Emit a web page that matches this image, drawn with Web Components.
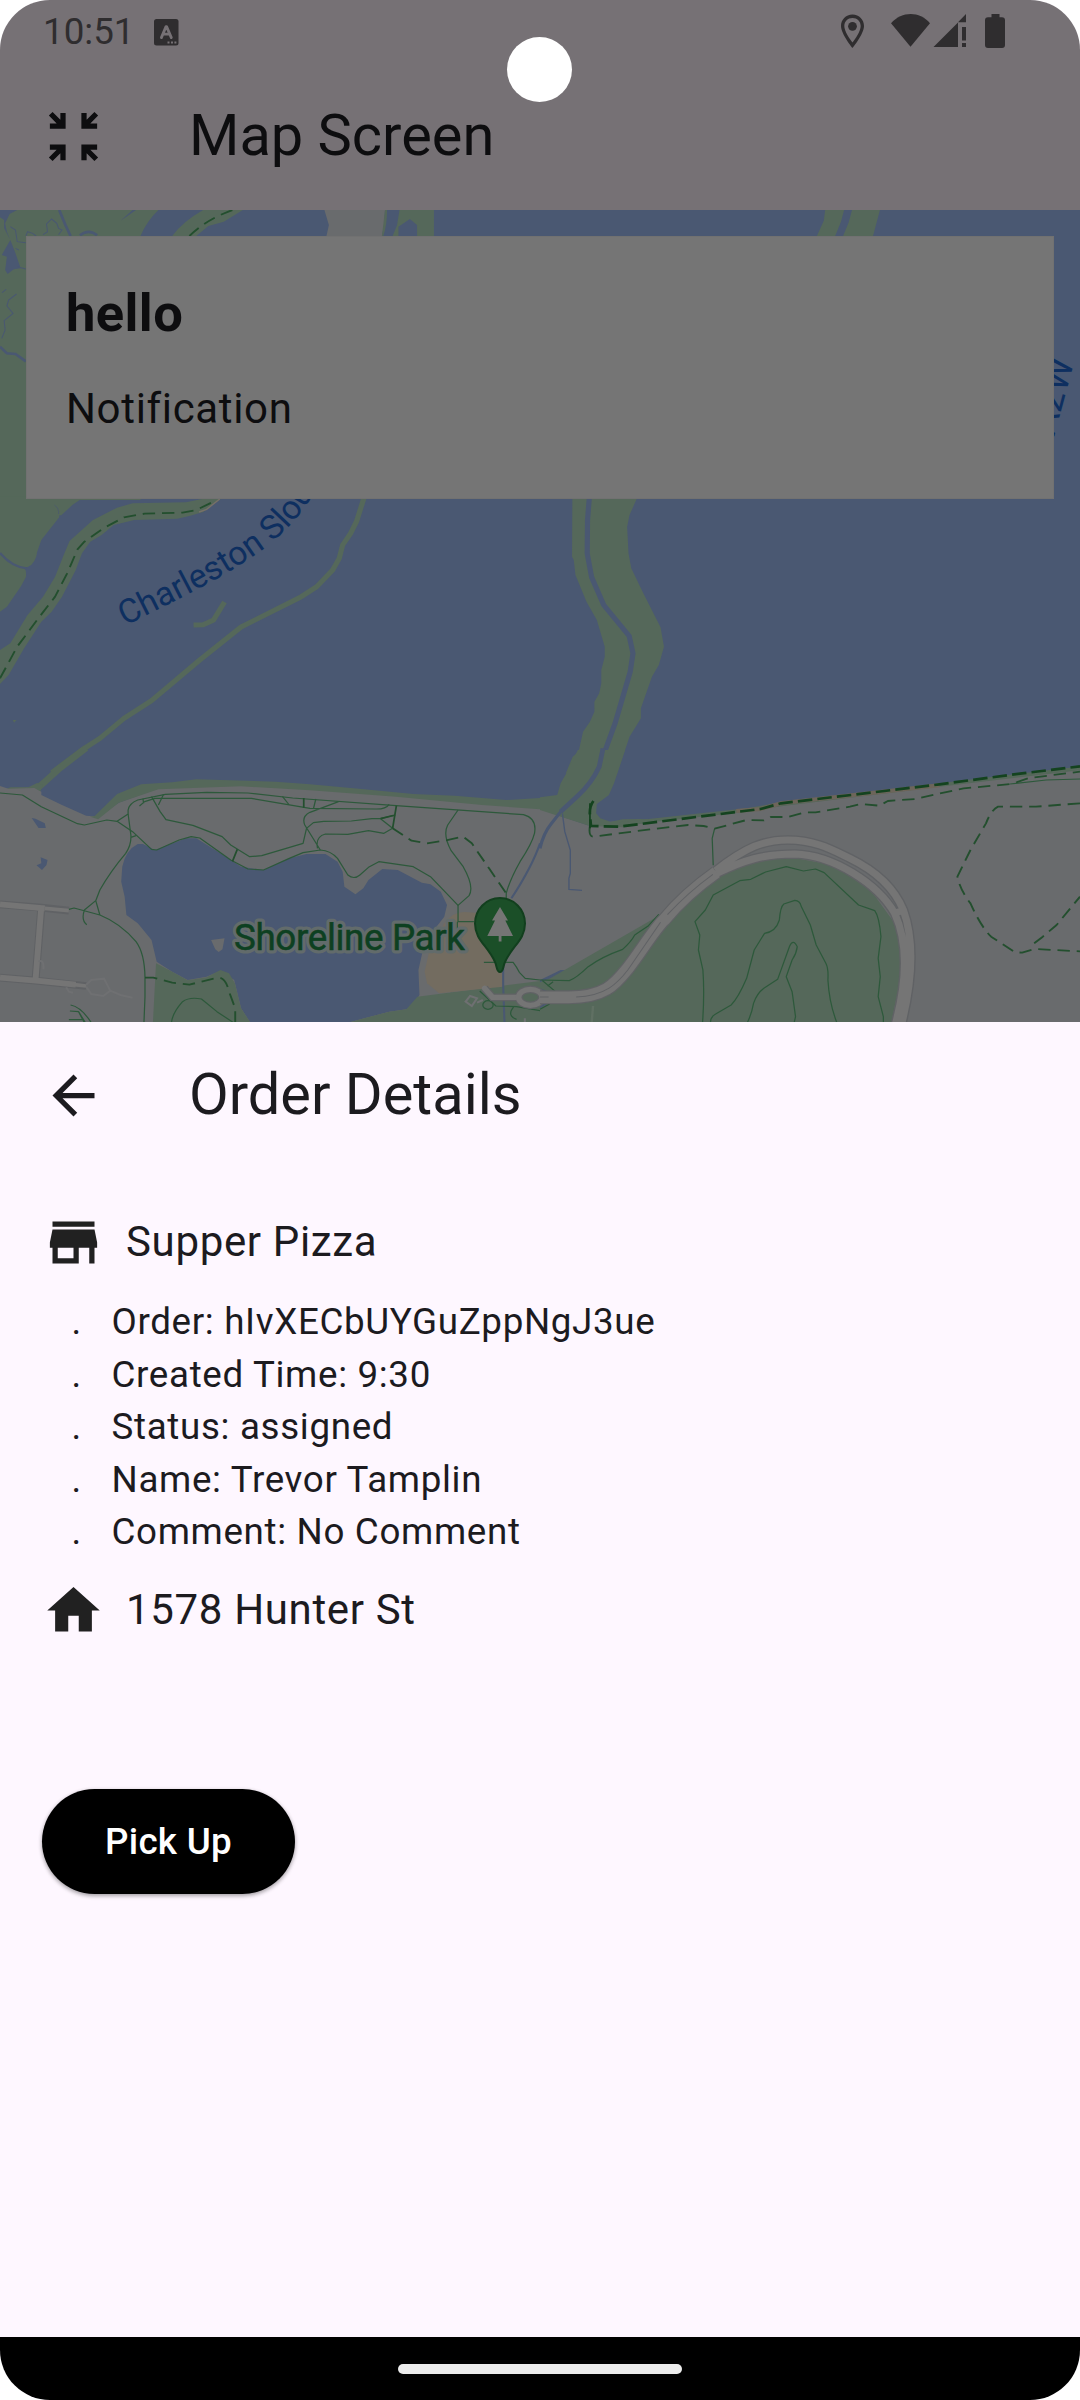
<!DOCTYPE html>
<html lang="en">
<head>
<meta charset="utf-8">
<title>Order Details</title>
<style>
html,body{margin:0;background:#fff}
body{width:1080px;height:2400px;overflow:hidden;font-family:Roboto,"Liberation Sans",sans-serif}
</style>
</head>
<body>
<phone-screen>
  <status-bar slot="top" time="10:51"></status-bar>
  <title-bar slot="top" dim icon="collapse">Map Screen</title-bar>
  <area-map slot="map"><notice-card><span slot="title">hello</span><span slot="text">Notification</span></notice-card></area-map>
  <order-sheet slot="sheet">
    <title-bar icon="back">Order Details</title-bar>
    <section-body>
      <place-row icon="store">Supper Pizza</place-row>
      <detail-list>
        <detail-item>Order: hIvXECbUYGuZppNgJ3ue</detail-item>
        <detail-item>Created Time: 9:30</detail-item>
        <detail-item>Status: assigned</detail-item>
        <detail-item>Name: Trevor Tamplin</detail-item>
        <detail-item>Comment: No Comment</detail-item>
      </detail-list>
      <place-row icon="home">1578 Hunter St</place-row>
      <pill-button>Pick Up</pill-button>
    </section-body>
  </order-sheet>
  <nav-bar slot="nav"></nav-bar>
</phone-screen>

<script>
const ICONS = {
  collapse: '<path d="M9 9H3V7h2.59L2.62 4.03 4.03 2.62 7 5.59V3h2zM15 9h6V7h-2.59l2.97-2.97-1.41-1.41L17 5.59V3h-2zM9 15H3v2h2.59l-2.97 2.97 1.41 1.41L7 18.41V21h2zM15 15h6v2h-2.59l2.97 2.97-1.41 1.41L17 18.41V21h-2z"/>',
  back: '<path d="M20 11H7.83l5.59-5.59L12 4l-8 8 8 8 1.41-1.41L7.83 13H20z"/>',
  store: '<path d="M20 4H4v2h16V4zm1 10v-2l-1-5H4l-1 5v2h1v6h10v-6h4v6h2v-6h1zm-9 4H6v-4h6v4z"/>',
  home: '<path d="M10 20v-6h4v6h5v-8h3L12 3 2 12h3v8z"/>'
};
const icon = n => `<svg width="63" height="63" viewBox="0 0 24 24" fill="currentColor">${ICONS[n]}</svg>`;

function define(name, render) {
  customElements.define(name, class extends HTMLElement {
    constructor() { super(); this.attachShadow({ mode: 'open' }); }
    connectedCallback() { this.shadowRoot.innerHTML = render(this); }
  });
}

define('phone-screen', () => `<style>
:host{display:flex;flex-direction:column;position:relative;width:1080px;height:2400px;border-radius:50px;overflow:hidden;background:#fef7ff}
.top{background:#767175;height:210px;display:flex;flex-direction:column}
.camera{position:absolute;left:507px;top:37px;width:65px;height:65px;border-radius:50%;background:#fff}
</style><div class="top"><slot name="top"></slot></div><slot name="map"></slot><slot name="sheet"></slot><slot name="nav"></slot><div class="camera"></div>`);

define('status-bar', el => `<style>
:host{display:flex;justify-content:space-between;height:63px;padding:0 73px 0 43px;box-sizing:border-box;color:#2f2d2f}
.l{display:flex;align-items:center;gap:19px;font-size:36.75px;line-height:63px}
.l svg{margin-top:1px}
</style><div class="l"><span>${el.getAttribute('time')}</span><svg width="25" height="27" viewBox="0 0 25 27"><rect width="24.5" height="26.5" rx="2.5" fill="#2f2d2f"/><path d="M7.4 18.6L12 7.6h.6l4.7 11M9 15.2h6.6" fill="none" stroke="#767175" stroke-width="2.8" stroke-linecap="round" stroke-linejoin="round"/><path d="M13.5 22.5h2v2h-2zM17 22.5h2v2h-2zM20.4 22.5h2v2h-2z" fill="#767175"/></svg></div>
<svg width="166" height="63" viewBox="841 0 166 63" fill="#2f2d2f"><path fill-rule="evenodd" d="M852.5 14.5C845.700 14.500 841 19.800 841 26c0 8 11.500 22 11.500 22S864 34 864 26c0-6.200-4.700-11.500-11.500-11.500zm0 3.400c4.700 0 8.200 3.400 8.200 8.100 0 5.300-5.600 13-8.200 16.500-2.600-3.500-8.200-11.200-8.200-16.500 0-4.700 3.500-8.100 8.200-8.100z"/><circle cx="852.500" cy="26.300" r="4.400"/><path d="M891 23.300C902 11 919.500 11 930 23.300L910.500 46.700z"/><path d="M933.500 47L958 22.500V47zM958 22.300L966 14V22.300zM962 27h4v13.500h-4zM962 43h4v4h-4z"/><path d="M991.500 14h8v3.200h2.500a3 3 0 0 1 3 3V45a3 3 0 0 1-3 3h-14a3 3 0 0 1-3-3V20.200a3 3 0 0 1 3-3h3.500z"/></svg>`);

define('title-bar', el => `<style>
:host{display:flex;align-items:center;height:147px;padding-left:42px;gap:84px;color:${el.hasAttribute('dim') ? '#0d0d0f' : '#1c1b1f'};font-size:57.75px;line-height:74px;white-space:nowrap}
span{padding-bottom:4px}
</style>${icon(el.getAttribute('icon'))}<span><slot></slot></span>`);

define('notice-card', () => `<style>
:host{display:block;box-sizing:border-box;width:1028px;height:263px;margin:26px;padding:39px 40px;background:#757575;color:#0d0d0f;box-shadow:inset 0 0 0 1px #717171}
.t{font-weight:700;font-size:52.5px;line-height:76px;height:92px;letter-spacing:.4px}
.b{font-size:42px;line-height:84px;letter-spacing:.66px}
</style><div class="t"><slot name="title"></slot></div><div class="b"><slot name="text"></slot></div>`);

define('area-map', () => `<style>
:host{display:grid;height:812px;overflow:hidden}
svg,slot{grid-area:1/1}
slot{display:block}
svg{display:block}
.g{fill:#55685a}.l{fill:#696b6d}.w{fill:#4a5872}
.gs{stroke:#55685a;fill:none}.ws{stroke:#4a5872;fill:none}
.p{stroke:#2d593b;stroke-width:3.6;fill:none;stroke-linejoin:round}
.d{stroke:#234f2e;stroke-width:5.500;fill:none;stroke-dasharray:36 20;stroke-linejoin:round}
.rc{stroke:#606265;fill:none}.rf{stroke:#757575;fill:none}
text{font-family:Roboto,"Liberation Sans",sans-serif}
</style><svg width="1080" height="812" viewBox="0 210 1080 812">
<rect class="w" y="210" width="1080" height="812"/>
<g transform="translate(0 200) scale(.34439 .33333)">
<path class="g" d="M0 30H385L350 62 365 52 395 30H460Q425 65 408 108V900H0zM590 30H705L650 65 605 78 570 108H500Q530 65 590 30z"/>
<path class="w" d="M0 30H50L28 42 15 70 20 95 32 125 45 160 60 205 40 208 22 222 15 210 20 170 5 165 30 120 12 85 12 60 0 52z"/>
<path class="ws" stroke-width="8" d="M172 30L190 75 205 108M232 106Q258 85 282 106M0 440L20 460 45 462 75 484"/>
<path class="ws" stroke-width="3" d="M30 80L45 90 50 125 75 128M75 108L80 95 95 100 105 108M125 104L138 95 135 72 150 57 165 70 170 85 180 90 170 104M6 278L18 268M48 282L25 300 20 318 38 340 12 362 15 390 5 415M50 200L75 207M45 145L55 150"/>
<path class="l" d="M942 30H1118L1115 75 1109 108H948L955 75z"/>
<path class="g" d="M1118 30H1124Q1124 75 1113 108H1109zM1160 30H1260V108H1211V75L1190 57 1157 80V108H1140L1153 75z"/>
<path class="d" d="M550 108Q600 58 675 30"/>
</g>
<g transform="translate(540 200) scale(.34439 .33333)"><path class="g" d="M828 30H883L874 65 857 108H804L824 62zM906 30H987L967 108H880L896 68z"/></g>
<g transform="translate(0 490) scale(.34439 .33333)">
<path class="g" d="M0 20H245L210 45 178 76H172V82L120 150 108 185 105 200Q95 232 70 232 78 245 75 262L60 290 20 350 0 365z"/>
<path class="ws" stroke-width="7" d="M0 189Q35 232 78 235"/><path class="ws" stroke-width="2" d="M158 45Q172 55 170 72"/>
<path class="g" d="M0 480L30 460 80 375 125 320 160 260 185 195 202 153 270 90 340 53 385 40 540 37 590 26H642L590 66 550 78 515 86 390 90 330 105 295 135 262 155 238 190 220 240 180 320 150 365 120 395 70 475 25 555 0 582z"/>
<path stroke="#777069" stroke-width="4" fill="none" d="M578 66L600 58 638 27"/>
<path class="d" d="M0 565L50 470 115 380 160 320 195 250 225 178 245 155 300 115 360 82 420 71 530 68 570 60 630 30"/>
<path class="gs" stroke-width="15" stroke-linejoin="round" d="M1058 20L1035 95 1018 130 995 165 985 205 966 240 920 290 875 320 700 411 580 510 440 632 360 685 290 745 235 782 150 848"/>
<path class="gs" stroke-width="15" d="M562 405L590 404 620 390 652 336"/><path class="g" d="M37 690H48L41 698z"/>
</g>
<g transform="translate(540 490) scale(.34439 .33333)">
<path class="g" d="M94 26L93 200 98 210 103 255 135 335 165 390 188 470V500L178 540V580L172 610 158 635V665L145 695 125 725 112 785 95 800 75 850H224L260 740 293 685V655L325 560 345 525 360 470 350 412 300 310 265 235 257 190 253 110 260 75 281 26z"/>
<path class="ws" stroke-width="15" d="M143 26L138 90 137 190 150 262 185 345 259 438 270 490 262 545 218 700 165 850"/>
</g>
<g transform="translate(0 750) scale(.34439 .33333)">
<path class="gs" stroke-width="19" d="M250 -6L170 58 108 116"/>
<path class="l" d="M0 108L20 115 100 112 120 125V135L180 165 250 197 285 200 345 158 460 115 700 105 900 115 1568 160V818H0z"/>
<path class="g" d="M20 116L30 112H82L108 99 125 105 117 124 100 114zM262 200L275 198 340 132 410 103 500 97 570 88 800 95 900 103 1050 117 1200 132 1320 137 1470 150 1568 144V178L1400 165 1150 140 900 121 700 109 460 118 345 158 285 208z"/>
<path class="w" d="M92 204L103 206 130 220 133 234H112zM118 322L138 330 135 345 122 360 106 346 120 340z"/>
<path class="w" d="M400 282Q365 300 355 350L352 395 362 440 367 495 400 520 440 570 455 635 500 665 545 690 600 680 640 662 680 690 700 775 727 818H1010L1130 785 1180 778 1200 765 1218 735 1215 660 1228 600 1260 540 1290 500 1298 465 1280 425 1250 403 1225 398 1155 360 1110 357 1070 390 1055 415 1032 433 1000 410 995 365 980 335 945 312H890L840 325 765 360 700 350 640 310 570 265H540L450 300 415 282z"/>
<path class="l" d="M613 570L652 565 646 598 635 606 625 598z"/>
<path class="g" d="M453 640L500 665 545 691 600 682 640 660 665 670 682 700 700 775 727 818H444zM1010 818L1130 785 1180 778 1212 740 1568 693V818z"/>
<path fill="#736c60" d="M1290 520Q1315 485 1350 486L1400 490 1460 640V710L1275 730 1240 700 1233 665 1245 610z"/>
<path class="ws" stroke-width="6" d="M1568 280Q1545 350 1485 445M1461 650V705L1465 818"/>
<g class="rc" stroke-width="23"><path d="M0 463L120 473 200 482M0 683L105 692 250 708M120 473L103 692"/></g>
<g class="rf" stroke-width="17"><path d="M0 463L130 475M0 683L105 692 220 704M120 469L103 692"/><path stroke-width="11" d="M130 475L200 482M210 703L250 708"/></g>
<path stroke="#6f7072" stroke-width="6" fill="none" d="M250 705L265 690 302 686 320 722 300 738 265 732 250 710M320 722L350 735 385 743M192 712L200 725 212 728M112 635Q128 625 126 658M1352 755L1365 738 1385 745 1370 768zM1385 758L1402 750M1524 805V818"/>
<g class="p"><path d="M0 129L65 135 120 170 225 221 245 225 310 210 340 214 372 192V180Q375 160 400 150L480 133 600 127 720 129 850 144 1150 167 1520 194Q1560 205 1552 250 1545 280 1510 335 1480 390 1470 430V445"/>
<path d="M340 214L385 245 440 298 455 300 520 270 555 260 580 264 670 330 720 357 765 360 840 325 880 308 930 300Q960 302 980 325L1010 375Q1028 390 1045 375L1070 352 1100 335 1200 350 1250 380 1330 466 1362 437Q1378 410 1345 350L1310 302Q1285 255 1300 225L1330 180"/>
<path d="M372 192L380 255Q382 285 365 310 320 365 290 420L278 452 245 480Q235 510 252 524M278 452L290 495M200 478L215 474 290 495Q350 520 395 575 420 610 421 683V740L418 818M380 262L395 257M405 168L420 155 450 145H730L900 175 1090 177Q1120 178 1130 163M440 140L465 185 482 209 560 226 645 260 670 285 725 320 760 317 880 280 890 235 910 218 940 214 1020 213 1080 206 1105 206 1148 195M475 133L460 165M415 146L417 160M820 139L840 165M917 147L910 177M983 155L900 187Q875 200 885 225L930 300M922 295Q915 260 945 252L1010 253 1070 242 1115 250 1140 235M1105 206L1140 235M1330 466V515H1376M1328 540V515M1405 637H1490Q1500 650 1508 667L1525 685 1568 690M1393 723L1440 768 1500 770 1568 782M1492 770Q1470 798 1500 808M498 818Q500 790 530 755 550 740 585 747L630 785 678 818M205 765Q235 770 265 818M203 783L228 785 245 818M200 809H240M228 785L248 818"/>
<ellipse cx="1417" cy="765" rx="15" ry="13"/></g>
<path stroke="#234f2e" fill="none" stroke-width="5" d="M689 298L675 334M882 144V173M1151 167L1140 235M1105 206L1148 195"/>
<path class="d" d="M1140 235L1195 272 1240 280 1290 272 1345 260 1370 280 1420 355 1470 430M421 683H445L500 698 550 704 630 683Q655 680 665 725L683 775V818"/>
<g class="rc" stroke-width="23"><path d="M1407 715L1430 742H1500"/><ellipse cx="1540" cy="742" rx="34" ry="24"/></g>
<g class="rf" stroke-width="16" stroke-linecap="round"><path d="M1407 715L1430 742H1500"/><ellipse cx="1540" cy="742" rx="34" ry="24"/></g>
</g>
<g transform="translate(540 750) scale(.34439 .33333)">
<path class="l" d="M0 178L145 228 205 215 350 207 640 175 1568 50V660H60L0 690z"/>
<path class="l" d="M1000 600H1568V818H1000z"/>
<path class="g" d="M110 0L90 40 82 60 60 100 50 135 0 142V180L145 228 240 232 350 210 290 207 240 208 205 215 175 205 163 190 165 162 200 135 215 100 247 0z"/>
<path class="ws" stroke-width="14" d="M183 -5L172 50Q150 100 110 137L60 185"/><path class="ws" stroke-width="9" d="M64 180L32 222Q10 250 0 295"/>
<path class="ws" stroke-width="4" d="M65 190L72 245 88 300V370L84 385V418L122 421"/>
<path class="g" d="M0 697L30 685 340 500 500 385 600 335 720 320 850 345 960 420 1030 520 1050 620 1040 720 1020 818H0V775L25 760V725L0 715z"/>
<path fill="none" stroke="#55685a" stroke-width="11" d="M230 222L600 180 700 163 1160 105 1568 55"/><path fill="none" stroke="#6d655a" stroke-width="12" d="M570 183L640 177 700 160 1160 106"/>
<g class="p"><path d="M503 346L500 265 507 236M0 690L85 692Q105 685 140 650 180 620 240 598 265 575 275 555L315 527 345 493M5 690L45 725M22 708L38 695M0 778L28 762M472 818Q478 730 473 660L460 600 464 555 450 515 480 480 503 435 580 392 612 388 655 366 715 350 765 363 800 357 825 368 925 465 972 482Q985 500 990 560L982 625 988 680 982 740 997 800V818M495 818Q495 800 510 792L555 765Q575 745 600 685L622 600 652 550Q685 545 695 510 698 470 708 462L740 451Q755 452 758 468L785 525 802 585 830 640Q838 655 836 690 840 760 862 818M602 818Q615 790 620 760 630 730 650 715L690 688 725 588Q735 565 747 590 745 610 732 630L715 680 732 725 742 800 738 818M1365 102L1470 90 1568 87"/></g>
<g class="rc"><g stroke-width="29"><path d="M510 362C600 290 650 270 720 270 800 270 850 300 900 325 990 370 1035 430 1055 480 1090 580 1080 700 1048 830M510 372C590 330 650 312 740 312 850 315 980 400 1030 490 1070 580 1065 700 1030 830"/></g><path stroke-width="42" d="M0 742H80C190 743 220 700 255 655 290 610 330 540 360 510 400 460 460 405 512 367"/></g>
<g class="rf"><path stroke-width="21" d="M510 362C600 290 650 270 720 270 800 270 850 300 900 325 990 370 1035 430 1055 480 1090 580 1080 700 1048 830M510 372C590 330 650 312 740 312 850 315 980 400 1030 490 1070 580 1065 700 1030 830M1020 492L1060 480"/><path stroke-width="35" d="M0 742H80C190 743 220 700 255 655 290 610 330 540 360 510 400 460 460 405 512 367"/></g>
<path class="rc" stroke-width="3" d="M0 741H25M105 741C190 738 225 700 255 660L350 517M370 494Q430 427 502 373"/>
<path stroke="#607063" stroke-width="7" d="M154 768L150 818"/>
<path class="d" d="M145 228Q140 260 155 260L320 238 430 225 475 228 507 236 600 210 650 211 670 201 720 201 770 187 800 187 900 170 930 162 985 167 1010 153 1090 147 1150 133 1230 115 1370 102 1420 84 1568 65M1568 160L1440 170H1330Q1310 180 1295 220L1250 300 1212 380Q1220 420 1250 460 1280 530 1310 560L1380 607 1400 608 1435 597 1568 604M1435 580L1460 560 1500 525 1568 440"/>
<path stroke="#14431f" stroke-width="8" fill="none" stroke-dasharray="42 15" d="M155 153Q143 170 145 195L148 228 230 230 640 177 700 160 1000 123 1160 103 1400 70 1568 49"/>
<path stroke="#14431f" stroke-width="5" fill="none" d="M145 160V235"/>
</g>
<path id="creek" fill="none" d="M125 626L173 602Q221 578 255 555 289 532 309 501L340 450"/>
<text font-size="33.500" fill="#0e2f60"><textPath href="#creek">Charleston Slough</textPath></text>
<text font-size="37" fill="#0e2f60" transform="translate(1054 437) rotate(-75)">A2W</text>
<text x="234" y="949.500" font-size="36.750" textLength="231" fill="#0d4021" stroke="#626b6b" stroke-width="7" stroke-linejoin="round">Shoreline Park</text>
<text x="234" y="949.500" font-size="36.750" textLength="231" fill="#0d4021" stroke="#0d4021" stroke-width=".5" aria-hidden="true">Shoreline Park</text>
<path d="M500 972C496.500 972 497 966 495 962 488 946 475 940 475 923.500A25 25.500 0 0 1 525 923.500C525 940 512 946 505 962 503 966 503.500 972 500 972z" fill="#1b4f28" stroke="#123f1e" stroke-width="2"/>
<path d="M500 907L508 920.600H505.300L513 936H501.500V941.600H498.700V936H487.300L495 920.600H492z" fill="#757575"/>
</svg><slot></slot>`);

define('order-sheet', () => `<style>:host{display:flex;flex-direction:column;height:1315px;background:#fef7ff}</style><slot></slot>`);
define('section-body', () => `<style>:host{display:flex;flex-direction:column;align-items:flex-start;gap:21px;padding:42px 42px 0}</style><slot></slot>`);
define('place-row', el => `<style>
:host{display:flex;align-items:center;gap:21px;height:63px;color:#1c1b1f;font-size:42px;line-height:61px;letter-spacing:.66px;white-space:nowrap}
svg{color:#212121}span{padding-bottom:2px}
</style>${icon(el.getAttribute('icon'))}<span><slot></slot></span>`);
define('detail-list', () => `<style>:host{display:flex;flex-direction:column}</style><slot></slot>`);
define('detail-item', () => `<style>
:host{display:grid;grid-template-columns:40px auto;box-sizing:border-box;height:52.5px;padding:1px 0 0 29.500px;color:#1c1b1f;font-size:36.75px;line-height:52.5px;letter-spacing:.66px;white-space:nowrap}
</style><span>.</span><span><slot></slot></span>`);
define('pill-button', () => `<style>
:host{display:block;margin-top:126px}
button{display:block;width:253px;height:105px;border:0;padding:1px 0 0;box-sizing:border-box;border-radius:53px;background:#000;color:#fff;font:500 36.75px/104px Roboto,"Liberation Sans",sans-serif;letter-spacing:.26px;box-shadow:0 2px 4px rgba(0,0,0,.3),0 1px 4px rgba(0,0,0,.1)}
</style><button><slot></slot></button>`);
define('nav-bar', () => `<style>
:host{display:flex;height:63px;background:#000;align-items:center;justify-content:center}
div{width:284px;height:10px;border-radius:5px;background:#ececec}
</style><div></div>`);
</script>
</body>
</html>
